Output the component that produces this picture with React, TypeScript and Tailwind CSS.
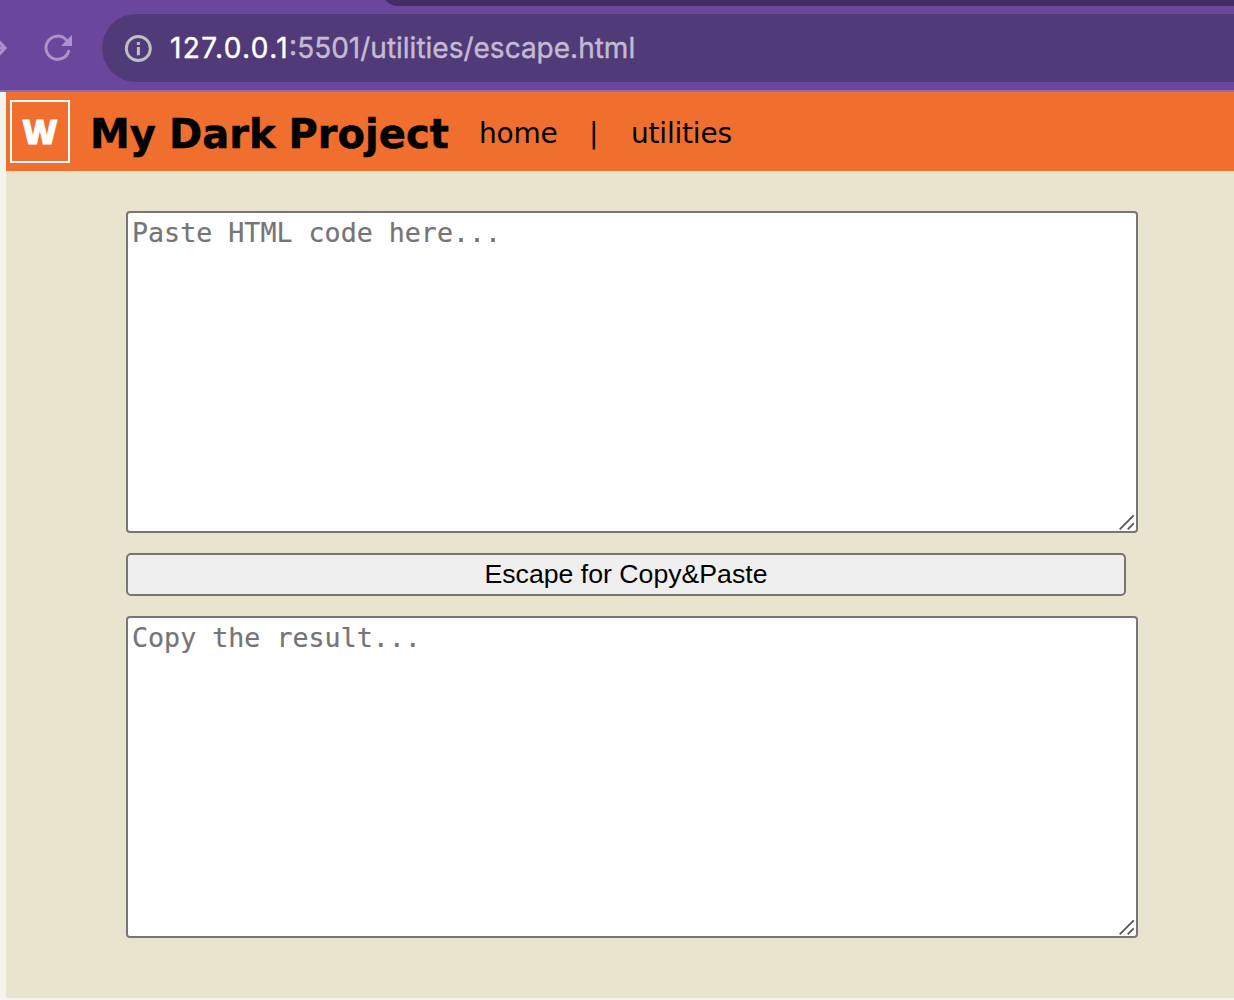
import React from "react";

function CodeArea({ placeholder }: { placeholder: string }) {
  return (
    <div className="relative h-[322px] w-[1012px]">
      <textarea
        placeholder={placeholder}
        className="block h-full w-full resize-none rounded-[4px] border-2 border-[#767676] bg-white px-1 py-[4px] font-['DejaVu_Sans_Mono',monospace] text-[26.67px] leading-[32px] text-black outline-none placeholder:text-[#757575] [-webkit-text-stroke:0.2px_#757575]"
      />
      <svg
        className="pointer-events-none absolute right-[2px] bottom-[2px]"
        width="17"
        height="17"
        viewBox="0 0 17 17"
        fill="none"
        stroke="#555555"
        strokeWidth="1.8"
      >
        <path d="M.7 15.4 14.7 1.4M8.7 15.4l6-6" />
      </svg>
    </div>
  );
}

function BrowserBar() {
  return (
    <div className="relative flex h-[92px] w-full items-start overflow-hidden border-b-2 border-[#8a6bb3] bg-[#6a479c]">
      <div className="absolute -top-[14px] left-[382px] h-[20px] w-[900px] rounded-bl-[16px] bg-[#432d62]" />
      <svg className="mt-[36px] h-6 w-[8px] shrink-0" viewBox="0 0 8 24" fill="none" stroke="#a992c9" strokeWidth="3.2">
        <path d="M-8 12H5M-1 5.5l6 6.5-6 6.5" />
      </svg>
      <svg className="mt-[32px] ml-[34px] h-8 w-8 shrink-0" viewBox="0 0 32 32">
        <path
          d="M26.7 19.2A11.6 11.6 0 1 1 24.2 7.9"
          fill="none"
          stroke="#ab94ca"
          strokeWidth="3"
          strokeLinecap="round"
        />
        <path d="M30 3V14H19z" fill="#ab94ca" />
      </svg>
      <div className="mt-[14px] ml-[28px] flex h-[68px] w-[1200px] shrink-0 items-center rounded-l-full bg-[#513a78] pl-[22px]">
        <svg className="h-7 w-7 shrink-0" viewBox="0 0 28 28">
          <circle cx="14.3" cy="14.5" r="12" fill="none" stroke="#bdc1c4" strokeWidth="2.9" />
          <path d="M12.9 8h3v3h-3zM12.9 13h3v8.2h-3z" fill="#bdc1c4" />
        </svg>
        <div className="ml-[18px] font-['Inter',sans-serif] text-[28px] leading-8 whitespace-nowrap text-[#c5bad3]">
          <span className="tracking-[1.4px] text-white [-webkit-text-stroke:0.4px_white]">127.0.0.1</span>
          <span className="[-webkit-text-stroke:0.4px_#c5bad3]">:5501/utilities/escape.html</span>
        </div>
      </div>
    </div>
  );
}

export default function App() {
  return (
    <div className="flex h-[1000px] w-[1234px] flex-col overflow-hidden bg-[#f6f4ee]">
      <BrowserBar />
      <div className="ml-[6px] flex h-[906px] flex-col bg-[#e8e4ce]">
        <header className="flex h-[79px] items-center bg-[#f06f2e] pl-1 font-['DejaVu_Sans',sans-serif] text-black">
          <div className="flex h-[63px] w-[60px] items-center justify-center border-2 border-white font-['Open_Sans',sans-serif] text-[34px] font-extrabold text-white [-webkit-text-stroke:0.8px_white]">
            W
          </div>
          <h1 className="ml-[20px] w-[389px] pt-[4px] text-[40px] font-bold tracking-[0.03px] whitespace-nowrap [word-spacing:-1px] [-webkit-text-stroke:0.5px_black]">
            My Dark Project
          </h1>
          <nav className="flex items-center pt-[4px] text-[28px] tracking-[-0.2px]">
            <a className="w-[110px]">home</a>
            <span className="w-[42px]">|</span>
            <a>utilities</a>
          </nav>
        </header>
        <main className="flex flex-col gap-5 pt-10 pl-[120px]">
          <CodeArea placeholder="Paste HTML code here..." />
          <button className="h-[43px] w-[1000px] rounded-[5px] border-2 border-[#767676] bg-[#efefef] pb-[2px] font-['Liberation_Sans',sans-serif] text-[26.67px] leading-[36px] text-black">
            Escape for Copy&amp;Paste
          </button>
          <CodeArea placeholder="Copy the result..." />
        </main>
      </div>
    </div>
  );
}
